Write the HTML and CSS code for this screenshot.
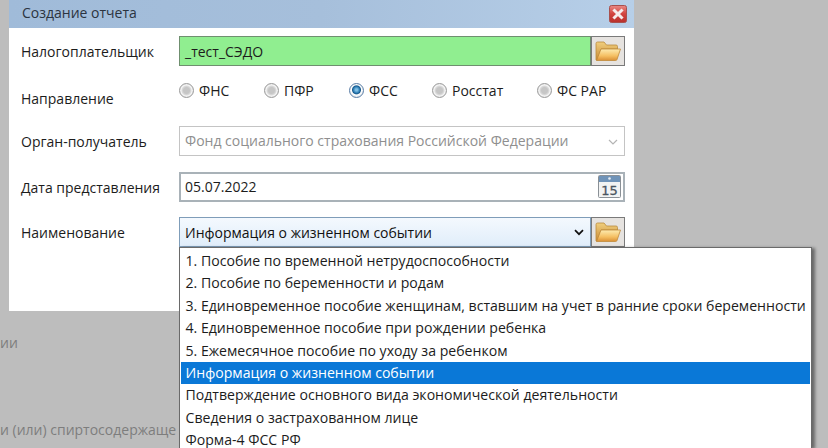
FILE: index.html
```html
<!DOCTYPE html>
<html lang="ru">
<head>
<meta charset="utf-8">
<title>Создание отчета</title>
<link rel="stylesheet" href="styles.css">
</head>
<body>
<div class="backdrop-text bt1">ии</div>
<div class="backdrop-text bt2">и (или) спиртосодержаще</div>
<main class="dialog">
  <header class="titlebar">
    <span>Создание отчета</span>
    <button class="close" aria-label="Закрыть">
      <svg width="18" height="18" viewBox="0 0 18 18"><defs><linearGradient id="r" x1="0" y1="0" x2="0" y2="1"><stop offset="0" stop-color="#e98a86"/><stop offset=".5" stop-color="#d2433e"/><stop offset="1" stop-color="#b8302c"/></linearGradient></defs><rect x=".5" y=".5" width="17" height="17" rx="2" fill="url(#r)" stroke="#a8504e"/><path d="M5.500 5.500l7 7M12.500 5.500l-7 7" stroke="#f6ecec" stroke-width="3" stroke-linecap="square"/></svg>
    </button>
  </header>
  <div class="form">
    <div class="row">
      <label class="lbl">Налогоплательщик</label>
      <div class="field green">_тест_СЭДО</div>
      <button class="folder"><svg width="28" height="24" viewBox="0 0 28 24"><use href="#fold"/></svg></button>
    </div>
    <div class="row radios-row">
      <label class="lbl lbl-low">Направление</label>
      <div class="radios">
        <span class="radio r1"><i class="dot"></i>ФНС</span>
        <span class="radio r2"><i class="dot"></i>ПФР</span>
        <span class="radio r3"><i class="dot on"></i>ФСС</span>
        <span class="radio r4"><i class="dot"></i>Росстат</span>
        <span class="radio"><i class="dot"></i>ФС РАР</span>
      </div>
    </div>
    <div class="row">
      <label class="lbl">Орган-получатель</label>
      <div class="field wide disabled">Фонд социального страхования Российской Федерации
        <svg class="chev" width="10" height="6" viewBox="0 0 10 6"><path d="M1 1l4 4 4-4" fill="none" stroke="#b4b4b4" stroke-width="1.2"/></svg>
      </div>
    </div>
    <div class="row row-date">
      <label class="lbl">Дата представления</label>
      <div class="field wide date">05.07.2022
        <svg class="cal" width="23" height="23" viewBox="0 0 23 23"><rect x=".5" y=".5" width="22" height="22" rx="1" fill="#f2f3f3" stroke="#8a9096"/><rect x="1" y="1" width="21" height="6" fill="#6f93b8"/><circle cx="11.5" cy="3.5" r="1.300" fill="#e8eef5"/><text x="11.5" y="19.500" class="caltext" text-anchor="middle">15</text></svg>
      </div>
    </div>
    <div class="row">
      <label class="lbl">Наименование</label>
      <div class="field select">Информация о жизненном событии
        <svg class="chev dark" width="10" height="7" viewBox="0 0 10 7"><path d="M1 1.200l4 4 4-4" fill="none" stroke="#111" stroke-width="1.700"/></svg>
      </div>
      <button class="folder"><svg width="28" height="24" viewBox="0 0 28 24"><use href="#fold"/></svg></button>
    </div>
  </div>
</main>
<ul class="popup">
  <li>1. Пособие по временной нетрудоспособности</li>
  <li>2. Пособие по беременности и родам</li>
  <li>3. Единовременное пособие женщинам, вставшим на учет в ранние сроки беременности</li>
  <li>4. Единовременное пособие при рождении ребенка</li>
  <li>5. Ежемесячное пособие по уходу за ребенком</li>
  <li class="sel">Информация о жизненном событии</li>
  <li>Подтверждение основного вида экономической деятельности</li>
  <li>Сведения о застрахованном лице</li>
  <li>Форма-4 ФСС РФ</li>
</ul>
<svg class="defs" width="0" height="0">
  <defs>
    <linearGradient id="fb" x1="0" y1="0" x2="0" y2="1"><stop offset="0" stop-color="#f0cf7e"/><stop offset="1" stop-color="#c98a35"/></linearGradient>
    <linearGradient id="ff" x1="0" y1="0" x2="0" y2="1"><stop offset="0" stop-color="#fdebb0"/><stop offset=".6" stop-color="#f5bf62"/><stop offset="1" stop-color="#d98f35"/></linearGradient>
    <g id="fold">
      <path d="M2 21V4.500Q2 3 3.500 3H10l2.500 3H22q1.500 0 1.500 1.500V10H7L3.500 21z" fill="url(#fb)" stroke="#b98a3e" stroke-width=".8"/>
      <path d="M7 10h19.500L23 20.500q-.3 1-1.500 1H2.500z" fill="url(#ff)" stroke="#c08a3a" stroke-width=".8"/>
    </g>
  </defs>
</svg>
</body>
</html>
```

FILE: styles.css
```css
* { box-sizing: border-box; }
html, body { margin: 0; padding: 0; }
body {
  width: 828px;
  height: 448px;
  overflow: hidden;
  position: relative;
  background: #bdbdbd;
  font-family: "Open Sans", "Noto Sans", sans-serif;
  font-size: 14px;
  color: #1c1c1c;
}
.backdrop-text { position: absolute; color: #7d7d7d; line-height: 20px; white-space: nowrap; }
.bt1 { left: 0; top: 333px; }
.bt2 { left: 0; top: 420px; }
.dialog {
  margin-left: 9px;
  width: 625px;
  height: 311px;
  background: #fff;
  display: flex;
  flex-direction: column;
}
.titlebar {
  height: 28px;
  flex: none;
  display: flex;
  align-items: center;
  justify-content: space-between;
  padding: 0 7px 3px 13px;
  background: linear-gradient(90deg, #a0bbd9 0%, #a6bfdb 50%, #b7cfe8 100%);
  color: #2b3440;
}
.close { width: 18px; height: 18px; padding: 0; border: 0; background: none; display: block; margin-top: 3px; }
.close svg { display: block; }
.form {
  display: flex;
  flex-direction: column;
  padding: 8px 9px 0 12px;
  gap: 15px;
}
.row { display: flex; height: 30px; align-items: center; }
.row-date { margin-top: 1px; }
.lbl { width: 158px; flex: none; color: #1c1c1c; position: relative; top: 0; }
.lbl-low { top: 2px; }
.field {
  height: 30px;
  line-height: 30px;
  border: 1px solid #a9a9a9;
  padding: 0 5px;
  position: relative;
  white-space: nowrap;
}
.green { width: 412px; background: #90ee90; border-color: #6f8f6f; }
.wide { width: 446px; }
.disabled { color: #8f8f8f; border-color: #c4c4c4; line-height: 27px; }
.date { border: 2px solid #a9b2b8; line-height: 26px; padding: 0 4px; }
.select { width: 412px; background: linear-gradient(180deg, #f4f9fe 0%, #e0edfa 100%); border-color: #7f9db9; color: #111; line-height: 29px; }
.folder {
  width: 34px;
  height: 30px;
  padding: 0;
  border: 1px solid #7a7a7a;
  background: #e6e3e0;
  display: flex;
  align-items: center;
  justify-content: center;
}
.chev { position: absolute; right: 6px; top: 12px; }
.chev.dark { right: 6px; top: 11px; }
.cal { position: absolute; right: 2px; top: 1px; }
.caltext { font: 13px "DejaVu Sans", sans-serif; fill: #4a5560; stroke: #4a5560; stroke-width: .3; }
.radios { display: flex; height: 100%; margin-top: -11px; align-items: center; }
.radio { display: flex; align-items: center; color: #1c1c1c; width: 85px; }
.radio.r3 { width: 83px; }
.radio.r4 { width: 105px; }
.dot {
  width: 15px;
  height: 15px;
  border-radius: 50%;
  margin-right: 5px;
  border: 1px solid #9a9a9a;
  background: radial-gradient(circle at 50% 50%, #c6c6c6 0 3px, #dcdcdc 4.5px, #f7f7f7 5.5px, #dedede 7px);
  flex: none;
}
.dot.on { background: radial-gradient(circle at 50% 45%, #7fc0e6 0 1px, #1f6fa8 3.5px, #1a5a8c 4px, #fff 5px, #e4e8ec 7px); border-color: #5a7ea6; }
.popup {
  position: absolute;
  left: 179px;
  top: 247px;
  width: 633px;
  height: 201px;
  margin: 0;
  padding: 2px 1px 0;
  list-style: none;
  background: #fff;
  border: 1px solid #6a6a6a;
  border-bottom: 0;
  box-shadow: 3px 1px 3px rgba(0, 0, 0, .45);
  color: #1c1c1c;
  font-size: 14.1px;
}
.popup li { height: 22.4px; line-height: 21.4px; padding-left: 4.5px; white-space: nowrap; }
.popup li.sel { background: #0a78d7; color: #fff; }
.defs { position: absolute; }
```
